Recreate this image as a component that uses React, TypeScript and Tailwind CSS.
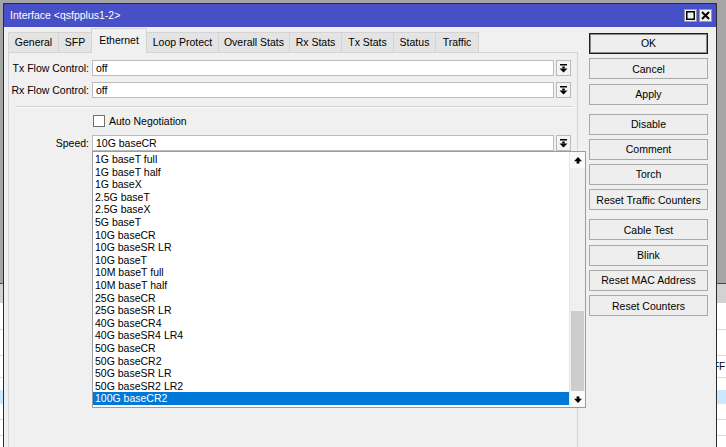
import React from 'react'

type Tab = { label: string; w: string; active?: boolean }

const tabs: Tab[] = [
  { label: 'General', w: 'w-[51px]' },
  { label: 'SFP', w: 'w-[34px]' },
  { label: 'Ethernet', w: 'w-[56px]', active: true },
  { label: 'Loop Protect', w: 'w-[73px]' },
  { label: 'Overall Stats', w: 'w-[72px]' },
  { label: 'Rx Stats', w: 'w-[53px]' },
  { label: 'Tx Stats', w: 'w-[53px]' },
  { label: 'Status', w: 'w-[43px]' },
  { label: 'Traffic', w: 'w-[44px]' },
]

const speeds = [
  '1G baseT full',
  '1G baseT half',
  '1G baseX',
  '2.5G baseT',
  '2.5G baseX',
  '5G baseT',
  '10G baseCR',
  '10G baseSR LR',
  '10G baseT',
  '10M baseT full',
  '10M baseT half',
  '25G baseCR',
  '25G baseSR LR',
  '40G baseCR4',
  '40G baseSR4 LR4',
  '50G baseCR',
  '50G baseCR2',
  '50G baseSR LR',
  '50G baseSR2 LR2',
  '100G baseCR2',
]

const buttonGroups = [
  ['OK', 'Cancel', 'Apply'],
  ['Disable', 'Comment', 'Torch', 'Reset Traffic Counters'],
  ['Cable Test', 'Blink', 'Reset MAC Address', 'Reset Counters'],
]

function DropButton() {
  return (
    <span className="ml-[2px] flex h-[16px] w-[15px] items-center justify-center border border-[#b9b9b9] bg-[#f4f4f4]">
      <svg width="9" height="9" viewBox="0 0 9 9">
        <rect x="1" y="0" width="7" height="1.5" fill="#000" />
        <rect x="3.25" y="2.5" width="2.5" height="2" fill="#000" />
        <polygon points="0.5,4.5 8.5,4.5 4.5,8.5" fill="#000" />
      </svg>
    </span>
  )
}

function ScrollArrow({ down }: { down?: boolean }) {
  return (
    <span className="flex h-[16px] w-full items-center justify-center bg-[#fafafa]">
      <svg width="8" height="7" viewBox="0 0 8 7" className={down ? 'rotate-180' : ''}>
        <polygon points="4,0 8,4.2 0,4.2" fill="#000" />
        <rect x="2.6" y="4" width="2.8" height="2.6" fill="#000" />
      </svg>
    </span>
  )
}

function FieldRow({ label, value, className }: { label: string; value: string; className: string }) {
  return (
    <div className={`flex items-center ${className}`}>
      <span className="w-[80px] text-right">{label}</span>
      <div className="ml-[3px] flex h-[16px] w-[462px] items-center border border-[#bcbcbc] bg-white pl-[3px]">
        {value}
      </div>
      <DropButton />
    </div>
  )
}

function SpeedList() {
  return (
    <div className="absolute left-[-1px] top-[15px] z-20 flex h-[257px] w-[494px] border border-[#9c9c9c] bg-white">
      <div className="flex-1 pt-[1px]">
        {speeds.map((s, i) => (
          <div
            key={s}
            className={`h-[12.6px] whitespace-nowrap pl-[2px] leading-[12.6px] ${
              i === speeds.length - 1 ? 'bg-[#0078d7] text-white' : 'text-black'
            }`}
          >
            {s}
          </div>
        ))}
      </div>
      <div className="flex w-[16px] flex-col border-l border-[#e6e6e6] bg-[#f0f0f0]">
        <ScrollArrow />
        <div className="flex-1" />
        <div className="mx-[1px] h-[80px] bg-[#cdcdcd]" />
        <ScrollArrow down />
      </div>
    </div>
  )
}

function TitleBar() {
  return (
    <div className="flex h-[23px] items-center bg-[#4850c8] pl-[6px] pr-[4px] text-white">
      <span className="flex-1">Interface &lt;qsfpplus1-2&gt;</span>
      <span className="flex h-[13px] w-[13px] items-center justify-center border border-[#9a9a9a] bg-[#f2f2f2]">
        <svg width="9" height="9" viewBox="0 0 9 9">
          <rect x="0.75" y="0.75" width="7.5" height="7.5" fill="none" stroke="#000" strokeWidth="1.5" />
        </svg>
      </span>
      <span className="ml-[2px] flex h-[13px] w-[13px] items-center justify-center border border-[#9a9a9a] bg-[#f2f2f2]">
        <svg width="9" height="9" viewBox="0 0 9 9">
          <path d="M1 1 L8 8 M8 1 L1 8" stroke="#000" strokeWidth="2" />
        </svg>
      </span>
    </div>
  )
}

function Tabs() {
  return (
    <div className="flex h-[24px] items-end">
      {tabs.map((t, i) =>
        t.active ? (
          <div
            key={t.label}
            className={`relative z-10 -ml-px mb-[-1px] flex h-[25px] items-center justify-center border border-b-0 border-[#d4d4d4] bg-[#f0f0f0] pb-[2px] ${t.w}`}
          >
            {t.label}
          </div>
        ) : (
          <div
            key={t.label}
            className={`flex h-[20px] items-center justify-center border border-b-0 border-[#d4d4d4] bg-[#e4e4e4] ${t.w} ${
              i === 0 ? '' : '-ml-px'
            }`}
          >
            {t.label}
          </div>
        ),
      )}
    </div>
  )
}

function ActionButtons() {
  return (
    <div className="ml-[11px] flex w-[119px] flex-col gap-[9px] pt-[6px]">
      {buttonGroups.map((g, gi) => (
        <div key={gi} className="flex flex-col gap-[4.3px]">
          {g.map((b) => (
            <div
              key={b}
              className={`flex h-[21px] items-center justify-center whitespace-nowrap border bg-[#eeeeee] ${
                b === 'OK' ? 'border-[#1e1e1e] shadow-[inset_0_0_0_1px_#8a8a8a]' : 'border-[#a9a9a9]'
              }`}
            >
              {b}
            </div>
          ))}
        </div>
      ))}
    </div>
  )
}

function BackgroundList() {
  return (
    <div className="flex flex-col">
      <div className="h-[283px]" />
      <div className="h-[20px] border-t border-[#4a4a4a] bg-[#d2d2d2]" />
      <div className="h-[27px] border-b border-[#dcdcdc] bg-white" />
      <div className="h-[26px] border-b border-[#dcdcdc] bg-white" />
      <div className="flex h-[22px] items-center border-b border-[#dcdcdc] bg-white pl-[713px] text-[10px]">FF</div>
      <div className="h-[12px] bg-white" />
      <div className="h-[14px] bg-[#cce8ff]" />
      <div className="h-[16px] border-b border-[#dcdcdc] bg-white" />
      <div className="h-[16px] border-b border-[#dcdcdc] bg-white" />
      <div className="h-[30px] bg-white" />
    </div>
  )
}

export default function App() {
  return (
    <div className="relative h-[447px] w-[726px] overflow-hidden bg-[#a6a6a6] font-['Liberation_Sans',Arial,sans-serif] text-[10.5px] leading-none text-black">
      <BackgroundList />
      <div className="absolute left-[3px] top-[3px] flex h-[470px] w-[714px] flex-col border border-b-0 border-[#2c2c2c] bg-[#f0f0f0]">
        <TitleBar />
        <div className="flex flex-1 items-stretch">
          <div className="ml-[4px] flex flex-col pt-[1px]">
            <Tabs />
            <div className="flex w-[570px] flex-1 flex-col border border-b-0 border-[#d4d4d4] bg-[#f0f0f0]">
              <FieldRow label="Tx Flow Control:" value="off" className="mt-[7px]" />
              <FieldRow label="Rx Flow Control:" value="off" className="mt-[6px]" />
              <div className="ml-[6px] mt-[8px] w-[557px] border-t border-b border-t-[#cfcfcf] border-b-white" />
              <div className="mt-[7px] flex h-[12px] items-center pl-[84px]">
                <span className="h-[12px] w-[12px] border border-[#707070] bg-white" />
                <span className="ml-[4px]">Auto Negotiation</span>
              </div>
              <div className="mt-[8px] flex items-center">
                <span className="w-[80px] text-right">Speed:</span>
                <div className="relative ml-[3px] flex h-[16px] w-[462px] items-center border border-[#bcbcbc] bg-white pl-[3px]">
                  10G baseCR
                  <SpeedList />
                </div>
                <DropButton />
              </div>
            </div>
          </div>
          <ActionButtons />
        </div>
      </div>
    </div>
  )
}
